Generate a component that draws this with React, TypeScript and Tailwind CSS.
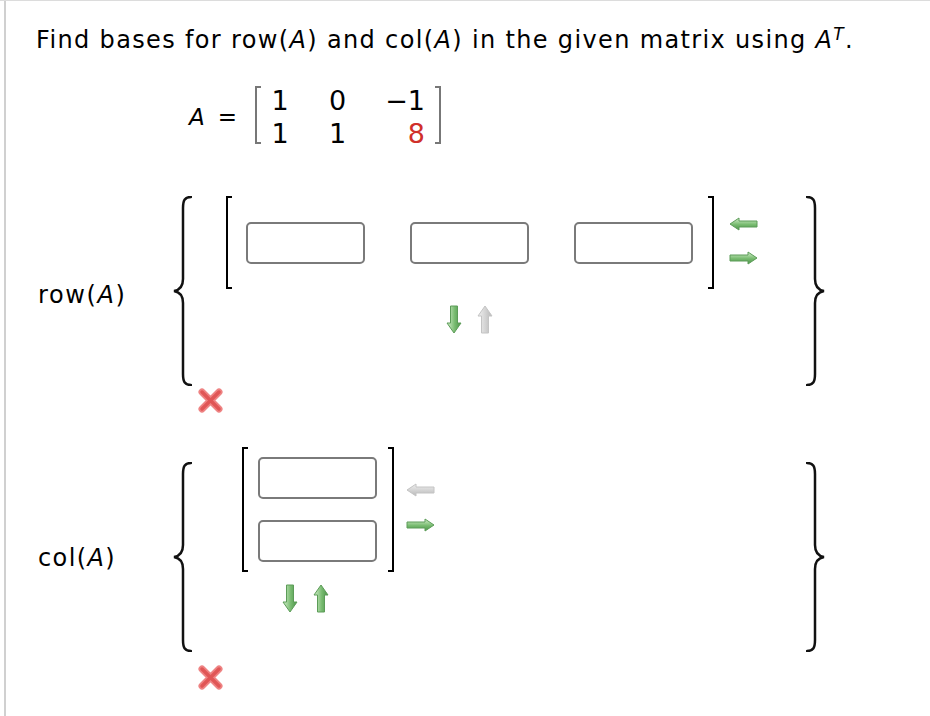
import React from 'react';

type Tone = 'green' | 'gray';

const fills: Record<Tone, { a: string; b: string; c: string; stroke: string }> = {
  green: { a: '#d4efcc', b: '#78bb70', c: '#4d944a', stroke: '#5c9c58' },
  gray: { a: '#f0f0f0', b: '#d2d2d2', c: '#b8b8b8', stroke: '#c4c4c4' },
};

// small shaded arrow like the ones in the answer widget
const Arrow = ({ dir, tone, id }: { dir: 'left' | 'right' | 'up' | 'down'; tone: Tone; id: string }) => {
  const f = fills[tone];
  const horizontal = dir === 'left' || dir === 'right';
  const paths = {
    left: 'M1 7 L10 1 L10 4 L28 4 L28 10 L10 10 L10 13 Z',
    right: 'M28 7 L19 1 L19 4 L1 4 L1 10 L19 10 L19 13 Z',
    down: 'M4.5 1 L11.5 1 L11.5 18 L15 18 L8 28 L1 18 L4.5 18 Z',
    up: 'M8 1 L15 11 L11.5 11 L11.5 28 L4.5 28 L4.5 11 L1 11 Z',
  };
  return (
    <svg width={horizontal ? 29 : 16} height={horizontal ? 14 : 29} className="block">
      <defs>
        <linearGradient id={id} x1="0" y1="0" x2={horizontal ? '0' : '1'} y2={horizontal ? '1' : '0'}>
          <stop offset="0" stopColor={f.a} />
          <stop offset="0.55" stopColor={f.b} />
          <stop offset="1" stopColor={f.c} />
        </linearGradient>
      </defs>
      <path d={paths[dir]} fill={`url(#${id})`} stroke={f.stroke} strokeWidth="1" strokeLinejoin="round" />
    </svg>
  );
};

const Brace = ({ side }: { side: 'left' | 'right' }) => (
  <svg width="20" height="190" className="block shrink-0">
    <path
      d={
        side === 'left'
          ? 'M19 1 C13 1 11 4 11 12 L11 83 C11 90 8 94 2 95 C8 96 11 100 11 107 L11 178 C11 186 13 189 19 189'
          : 'M1 1 C7 1 9 4 9 12 L9 83 C9 90 12 94 18 95 C12 96 9 100 9 107 L9 178 C9 186 7 189 1 189'
      }
      fill="none"
      stroke="#111"
      strokeWidth="2.5"
      strokeLinecap="round"
    />
  </svg>
);

const WrongMark = () => (
  <svg width="27" height="27" className="block">
    <g strokeLinecap="round">
      <path d="M5 5 L22 22 M22 5 L5 22" stroke="#ee8383" strokeWidth="7" />
      <path d="M5 5 L22 22 M22 5 L5 22" stroke="#e05656" strokeWidth="3.5" />
    </g>
  </svg>
);

const Field = () => <input className="block w-[119px] h-[42px] border-2 border-[#7a7a7a] rounded-[5px] bg-white" />;

export default function App() {
  return (
    <div className="min-h-screen bg-white border-t border-[#dcdcdc] font-['DejaVu_Sans',sans-serif] text-black">
      <div className="ml-1 min-h-[715px] border-l-2 border-[#d0d0d0] pl-[30px] pt-[23px]">
        <p className="text-[24px] leading-[32px] tracking-[1.35px]">
          Find bases for row(<i>A</i>) and col(<i>A</i>) in the given matrix using <i>A</i>
          <sup className="italic text-[17px]">T</sup>.
        </p>

        {/* matrix A */}
        <div className="flex items-center mt-[28px] ml-[153px]">
          <span className="text-[23px] italic">A</span>
          <span className="text-[23px] ml-[13px]">=</span>
          <div className="self-start mt-[2px] ml-[18px] w-[6px] h-[58px] border-l-2 border-y-2 border-[#777]" />
          <div className="grid grid-cols-[38px_77px_49px] text-[27px] leading-[33px]">
            <span className="text-center">1</span>
            <span className="text-center">0</span>
            <span className="text-right">−1</span>
            <span className="text-center">1</span>
            <span className="text-center">1</span>
            <span className="text-right text-[#d0302a]">8</span>
          </div>
          <div className="self-start mt-[2px] ml-[10px] w-[6px] h-[58px] border-r-2 border-y-2 border-[#777]" />
        </div>

        {/* row(A) */}
        <div className="flex w-[790px] mt-[46px]">
          <div className="w-[136px] pl-[2px] pt-[83px] text-[24px] leading-[32px] tracking-[1.6px]">
            row(<i>A</i>)
          </div>
          <Brace side="left" />
          <div className="flex-1 ml-[34px]">
            <div className="flex items-start">
              <div className="flex items-center h-[93px]">
                <div className="w-[6px] h-[93px] border-l-2 border-y-2 border-black" />
                <div className="flex gap-[45px] ml-[14px] mr-[15px]">
                  <Field />
                  <Field />
                  <Field />
                </div>
                <div className="w-[6px] h-[93px] border-r-2 border-y-2 border-black" />
              </div>
              <div className="ml-[15px] pt-[21px] flex flex-col gap-[20px]">
                <Arrow dir="left" tone="green" id="r1" />
                <Arrow dir="right" tone="green" id="r2" />
              </div>
            </div>
            <div className="flex gap-[15px] mt-[16px] ml-[220px]">
              <Arrow dir="down" tone="green" id="r3" />
              <Arrow dir="up" tone="gray" id="r4" />
            </div>
          </div>
          <Brace side="right" />
        </div>
        <div className="mt-[1px] ml-[161px]">
          <WrongMark />
        </div>

        {/* col(A) */}
        <div className="flex w-[790px] mt-[33px]">
          <div className="w-[136px] pl-[2px] pt-[95px] text-[24px] leading-[32px] tracking-[1.4px]">
            col(<i>A</i>)
          </div>
          <div className="mt-[15px]">
            <Brace side="left" />
          </div>
          <div className="flex-1 ml-[50px]">
            <div className="flex items-start">
              <div className="flex items-center h-[125px]">
                <div className="w-[6px] h-[125px] border-l-2 border-y-2 border-black" />
                <div className="flex flex-col gap-[21px] ml-[10px] mr-[11px]">
                  <Field />
                  <Field />
                </div>
                <div className="w-[6px] h-[125px] border-r-2 border-y-2 border-black" />
              </div>
              <div className="ml-[12px] pt-[36px] flex flex-col gap-[21px]">
                <Arrow dir="left" tone="gray" id="c1" />
                <Arrow dir="right" tone="green" id="c2" />
              </div>
            </div>
            <div className="flex gap-[15px] mt-[12px] ml-[40px]">
              <Arrow dir="down" tone="green" id="c3" />
              <Arrow dir="up" tone="green" id="c4" />
            </div>
          </div>
          <div className="mt-[15px]">
            <Brace side="right" />
          </div>
        </div>
        <div className="mt-[12px] ml-[161px]">
          <WrongMark />
        </div>
      </div>
    </div>
  );
}
